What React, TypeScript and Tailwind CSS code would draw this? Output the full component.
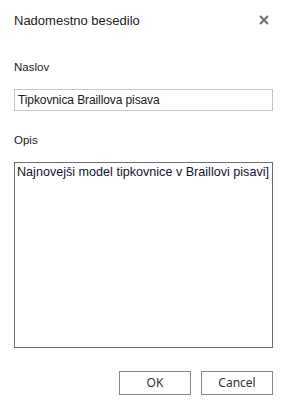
import React from 'react';

export default function App() {
  return (
    <div className="w-[287px] h-[408px] bg-white flex flex-col px-[14px] font-['Liberation_Sans',Arial,sans-serif] text-[#222]">
      {/* Header */}
      <div className="flex items-start justify-between pt-[12px]">
        <h1 className="text-[13px] leading-[18px] font-normal">Nadomestno besedilo</h1>
        <button className="mt-[2px] mr-[4px] w-[11px] h-[11px] flex items-center justify-center" aria-label="Zapri">
          <svg width="10" height="10" viewBox="0 0 10 10">
            <path d="M1 1 L9 9 M9 1 L1 9" stroke="#6b6b6b" strokeWidth="1.8" />
          </svg>
        </button>
      </div>

      {/* Title field */}
      <label className="mt-[30px] text-[11.5px] leading-[14px]">Naslov</label>
      <input
        className="mt-[15px] h-[22px] w-full border border-[#c6c6c6] px-[3px] text-[12px] tracking-[-0.1px] text-[#1a1a1a] outline-none"
        defaultValue="Tipkovnica Braillova pisava"
      />

      {/* Description field */}
      <label className="mt-[22px] text-[11.5px] leading-[14px]">Opis</label>
      <textarea
        wrap="off"
        className="mt-[15px] h-[186px] w-full resize-none overflow-hidden border border-[#6e6e6e] px-[2px] py-[1px] text-[12.6px] leading-[16px] text-[#15152e] outline-none"
        defaultValue="Najnovejši model tipkovnice v Braillovi pisavi]"
      />

      {/* Buttons */}
      <div className="mt-[23px] flex justify-end gap-[10px]">
        <button className="w-[72px] h-[24px] border border-[#8a8a8a] bg-white text-[12px] text-[#333] font-['Noto_Sans',sans-serif]">OK</button>
        <button className="w-[72px] h-[24px] border border-[#8a8a8a] bg-white text-[12px] text-[#333] font-['Noto_Sans',sans-serif]">Cancel</button>
      </div>
    </div>
  );
}
